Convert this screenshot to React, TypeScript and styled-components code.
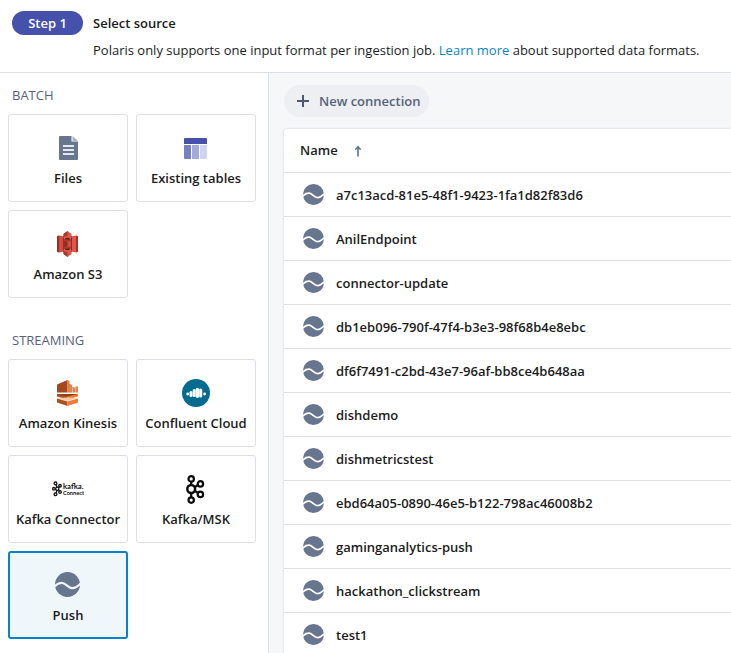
import React from 'react';
import styled, { createGlobalStyle } from 'styled-components';

const GlobalStyle = createGlobalStyle`
  *, *::before, *::after { box-sizing: border-box; }
  body {
    margin: 0;
    background: #f6f7f9;
    color: #1c1c1c;
    font: 13px/20px "Open Sans", "Noto Sans", sans-serif;
    overflow: hidden;
  }
`;

const Page = styled.div`
  display: flex;
  flex-direction: column;
  width: 100%;
  height: 100vh;
  overflow: hidden;
`;

const Header = styled.header`
  display: flex;
  align-items: flex-start;
  gap: 10px;
  flex: none;
  height: 73px;
  padding: 11px 12px 0;
  background: #fff;
  border-bottom: 1px solid #dcdee8;
`;

const StepBadge = styled.span`
  flex: none;
  width: 71px;
  height: 24px;
  border-radius: 12px;
  background: #4551ab;
  color: #fff;
  font-weight: 600;
  line-height: 24px;
  text-align: center;
`;

const HeaderText = styled.div`
  display: flex;
  flex-direction: column;
  gap: 7px;
  padding-top: 2px;
  white-space: nowrap;
`;

const Title = styled.h1`
  margin: 0;
  font-size: 13px;
  font-weight: 600;
  line-height: 20px;
`;

const Description = styled.p`
  margin: 0;
`;

const Link = styled.a`
  color: #0a84c6;
  text-decoration: none;
`;

const Body = styled.div`
  display: flex;
  flex: 1;
  min-height: 0;
`;

const Sidebar = styled.aside`
  flex: none;
  width: 269px;
  padding: 12px 8px 0;
  background: #fff;
  border-right: 1px solid #dfe1e8;
`;

const Group = styled.section`
  margin-bottom: 32px;
`;

const GroupTitle = styled.h2`
  margin: 0 0 9px;
  padding-left: 4px;
  color: #57627a;
  font-size: 13px;
  font-weight: 400;
  line-height: 20px;
`;

const Cards = styled.div`
  display: grid;
  grid-template-columns: 120px 120px;
  grid-auto-rows: 88px;
  gap: 8px;
`;

const Card = styled.button<{ $selected?: boolean }>`
  display: flex;
  flex-direction: column;
  align-items: center;
  justify-content: flex-start;
  padding: ${p => (p.$selected ? '14px 0 0' : '16px 0 0')};
  border: ${p => (p.$selected ? '2px solid #0783c9' : '1px solid #dcdee8')};
  border-radius: 3px;
  background: ${p => (p.$selected ? '#eff7fb' : '#fff')};
  color: inherit;
  font: inherit;
  font-weight: 600;
  white-space: nowrap;
`;

const IconBox = styled.span<{ $selected?: boolean }>`
  display: flex;
  align-items: center;
  justify-content: center;
  width: 34px;
  height: 34px;
  margin: 0 1px ${p => (p.$selected ? '4px' : '3px')} 0;
  svg { display: block; overflow: visible; }
`;

const Main = styled.main`
  display: flex;
  flex-direction: column;
  align-items: flex-start;
  flex: 1;
  min-width: 0;
  padding: 12px 0 0 15px;
  background: #f6f7f9;
  overflow: hidden;
`;

const NewButton = styled.button`
  display: flex;
  align-items: center;
  gap: 9px;
  flex: none;
  width: 145px;
  height: 32px;
  margin-bottom: 12px;
  padding: 0 0 0 12px;
  border: 0;
  border-radius: 16px;
  background: #edeff3;
  color: #57627a;
  font: inherit;
  font-weight: 600;
  white-space: nowrap;
`;

const Table = styled.div`
  width: 100%;
  background: #fff;
  border-radius: 3px 0 0 0;
  box-shadow: 0 0 2px rgba(40, 50, 80, 0.25);
  font-weight: 600;
`;

const TableHead = styled.div`
  display: flex;
  align-items: center;
  gap: 15px;
  height: 44px;
  padding: 0 0 1px 16px;
  border-bottom: 1px solid #dcdee8;
  svg { position: relative; top: 1px; }
`;

const Row = styled.div`
  display: flex;
  align-items: center;
  gap: 12px;
  height: 44px;
  padding-left: 19px;
  border-bottom: 1px solid #dcdee8;
  white-space: nowrap;
  svg { flex: none; margin-bottom: 1px; }
`;

const PushIcon = ({ size, wave = '#fff' }: { size: number; wave?: string }) => (
  <svg width={size} height={size} viewBox="0 0 24 24">
    <circle cx="12" cy="12" r="12" fill="#68758f" />
    <path
      d="M-.5 14C2 11.500 4.500 10.200 7 10.500c4 .5 5.500 5 9.500 5 3 0 5.500-1.800 8-4.500"
      fill="none"
      stroke={wave}
      strokeWidth="2"
    />
  </svg>
);

const FilesIcon = () => (
  <svg width="19" height="24" viewBox="-1 0 19 24">
    <path d="M1 0h11.500v5.500H19V23a1 1 0 0 1-1 1H1a1 1 0 0 1-1-1V1a1 1 0 0 1 1-1Z" fill="#68758f" />
    <path d="M13.500 0 19 5h-5.500Z" fill="#a9b2c6" />
    <path d="M4 9h11v2H4Zm0 4h11v2H4Zm0 4h11v2H4Z" fill="#e3e7f0" />
  </svg>
);

const TableIcon = () => (
  <svg width="23" height="21" viewBox="0 0 23 21">
    <path d="M1 0h21a1 1 0 0 1 1 1v5H0V1a1 1 0 0 1 1-1Z" fill="#4551ab" />
    <path d="M0 7h7v14H1a1 1 0 0 1-1-1Z" fill="#7681c4" />
    <path d="M8 7h7v14H8Z" fill="#a3abdb" />
    <path d="M16 7h7v13a1 1 0 0 1-1 1h-6Z" fill="#cfd4ec" />
  </svg>
);

const S3Icon = () => (
  <svg width="21" height="26" viewBox="0 0 21 26">
    <path d="M0 5.500 2 4.500l5 1v15l-5 1-2-1Z" fill="#d94b3f" />
    <path d="M21 5.500 19 4.500l-5 1v15l5 1 2-1Z" fill="#e1554a" />
    <path d="M0 5.500 2 4.500v17L0 20.500Z" fill="#8c3123" />
    <path d="M19 4.500 21 5.500v15l-2 1Z" fill="#9f3527" />
    <path d="M6 5h1v16H6Zm8 0h1v16h-1Z" fill="#8c3123" />
    <path d="M7 8h7v10H7Z" fill="#b33628" />
    <path d="m6.500 3 4-3 4 3v4l-4 1.200-4-1.200Z" fill="#e1554a" />
    <path d="m6.500 3 4-3v4.500L6.500 6Z" fill="#a5382b" />
    <path d="m6.500 23 4 3 4-3v-4l-4-1.200-4 1.200Z" fill="#e1554a" />
    <path d="m6.500 23 4 3v-4.500L6.500 20Z" fill="#a5382b" />
    <path d="m6.500 7.500 4-.8 4 .8-4 1.300Zm0 11 4 .8 4-.8-4-1.300Z" fill="#65231a" />
    <path d="M7 10.500h3.500v5H7Z" fill="#8c3123" />
    <path d="M10.500 10.500H14v5h-3.500Z" fill="#d94b3f" />
  </svg>
);

const KinesisIcon = () => (
  <svg width="21" height="26" viewBox="0 0 21 26">
    <path d="m0 4.500 10.500-4.500v12.500H0Z" fill="#a3481f" />
    <path d="M10.500 0 12.500 1v11.500h-2Z" fill="#ee7a38" />
    <path d="M12.500 4h1v8.500h-1Z" fill="#a3481f" />
    <path d="M13.500 4.300 15 5v7.500h-1.500Z" fill="#ee7a38" />
    <path d="M15.600 7h1v5.500h-1Z" fill="#a3481f" />
    <path d="M16.600 7.200 18 7.800v4.700h-1.400Z" fill="#ee7a38" />
    <path d="M18.600 6.500h.9v6h-.9Z" fill="#a3481f" />
    <path d="M19.500 6.200 21 6.800v5.700h-1.500Z" fill="#ee7a38" />
    <path d="M0 14h10.500v5.500L0 16.500Z" fill="#b0501f" />
    <path d="M10.500 14H21v2.500l-10.500 3Z" fill="#ee7a38" />
    <path d="M0 14h21l-10.500 2.500Z" fill="#8f3e1a" />
    <path d="m0 18 10.500-.5L21 18l-10.500 3Z" fill="#f9c6a4" />
    <path d="m0 18.500 10.500 3V26L0 22.500Z" fill="#b0501f" />
    <path d="M21 18.500l-10.500 3V26L21 22.500Z" fill="#ee7a38" />
  </svg>
);

const ConfluentIcon = () => (
  <svg width="28" height="28" viewBox="0 0 28 28">
    <circle cx="14" cy="14" r="14" fill="#066b91" />
    <g fill="none" stroke="#fff" strokeLinecap="round">
      <path strokeWidth="2.800" d="M5.700 15v.1M22.600 15v.1" />
      <path strokeWidth="3" d="M9 13.600v2.900" />
      <path strokeWidth="3.100" d="M12.200 11.500v5M18.700 11v6" />
      <path strokeWidth="3.400" d="M15.400 10.500v6.800" />
    </g>
  </svg>
);

const KafkaNodes = () => (
  <g fill="none" stroke="#0b0b0b" strokeWidth="2.200">
    <path d="M5 6.500v3M5 18.500v3.500M8.400 12.200l3.200-2M8.400 15.800l3.200 2" />
    <circle cx="5" cy="14" r="3.900" strokeWidth="2.500" />
    <circle cx="5" cy="3.900" r="2.700" />
    <circle cx="5" cy="25.100" r="2.700" />
    <circle cx="14.200" cy="8.900" r="2.700" />
    <circle cx="14.200" cy="19.400" r="2.700" />
  </g>
);

const KafkaIcon = () => (
  <svg width="18" height="29" viewBox="0.8 0 18 29">
    <KafkaNodes />
  </svg>
);

const KafkaConnectIcon = () => (
  <svg width="32" height="16" viewBox="0 0 32 16" fill="#111">
    <g fill="none" stroke="#111" strokeWidth="1.300">
      <circle cx="3.500" cy="2.400" r="1.400" />
      <circle cx="1.900" cy="7.800" r="1.300" />
      <circle cx="3.500" cy="13.200" r="1.400" />
      <circle cx="5.300" cy="7.800" r="1.600" />
      <circle cx="8" cy="4.800" r="1.300" />
      <circle cx="8" cy="11" r="1.300" />
      <path d="m4 3.500 1 3M4 12.300l1-3M6.700 6.500l1-1M6.700 9.200l1 1" />
    </g>
    <text x="11" y="7.600" textLength="20.500" lengthAdjust="spacingAndGlyphs" fontFamily="Lato, sans-serif" fontSize="8" fontWeight="700">kafka.</text>
    <text x="11" y="13.800" textLength="21" lengthAdjust="spacingAndGlyphs" fontFamily="Lato, sans-serif" fontSize="5" fontWeight="700">Connect</text>
  </svg>
);

const PlusIcon = () => (
  <svg width="14" height="14" viewBox="0 0 14 14">
    <path d="M7 1v12M1 7h12" stroke="#4d5970" strokeWidth="2" fill="none" />
  </svg>
);

const SortIcon = () => (
  <svg width="10" height="12" viewBox="0 0 10 12">
    <path d="M5 11.500V2" stroke="#68758f" strokeWidth="1.700" fill="none" />
    <path d="M5 .5 8.300 4.200 7.500 5 5 3.800 2.500 5 1.700 4.200Z" fill="#68758f" />
  </svg>
);

type Source = { label: string; icon: React.ReactNode; selected?: boolean };

const batch: Source[] = [
  { label: 'Files', icon: <FilesIcon /> },
  { label: 'Existing tables', icon: <TableIcon /> },
  { label: 'Amazon S3', icon: <S3Icon /> },
];

const streaming: Source[] = [
  { label: 'Amazon Kinesis', icon: <KinesisIcon /> },
  { label: 'Confluent Cloud', icon: <ConfluentIcon /> },
  { label: 'Kafka Connector', icon: <KafkaConnectIcon /> },
  { label: 'Kafka/MSK', icon: <KafkaIcon /> },
  { label: 'Push', icon: <PushIcon size={25} wave="#eff7fb" />, selected: true },
];

const connections = [
  'a7c13acd-81e5-48f1-9423-1fa1d82f83d6',
  'AnilEndpoint',
  'connector-update',
  'db1eb096-790f-47f4-b3e3-98f68b4e8ebc',
  'df6f7491-c2bd-43e7-96af-bb8ce4b648aa',
  'dishdemo',
  'dishmetricstest',
  'ebd64a05-0890-46e5-b122-798ac46008b2',
  'gaminganalytics-push',
  'hackathon_clickstream',
  'test1',
];

const SourceGroup = ({ title, items }: { title: string; items: Source[] }) => (
  <Group>
    <GroupTitle>{title}</GroupTitle>
    <Cards>
      {items.map(item => (
        <Card key={item.label} $selected={item.selected}>
          <IconBox $selected={item.selected}>{item.icon}</IconBox>
          {item.label}
        </Card>
      ))}
    </Cards>
  </Group>
);

export default function App() {
  return (
    <Page>
      <GlobalStyle />
      <Header>
        <StepBadge>Step 1</StepBadge>
        <HeaderText>
          <Title>Select source</Title>
          <Description>
            Polaris only supports one input format per ingestion job. <Link>Learn more</Link> about supported data formats.
          </Description>
        </HeaderText>
      </Header>
      <Body>
        <Sidebar>
          <SourceGroup title="BATCH" items={batch} />
          <SourceGroup title="STREAMING" items={streaming} />
        </Sidebar>
        <Main>
          <NewButton>
            <PlusIcon />
            New connection
          </NewButton>
          <Table>
            <TableHead>
              Name
              <SortIcon />
            </TableHead>
            {connections.map(name => (
              <Row key={name}>
                <PushIcon size={21} />
                {name}
              </Row>
            ))}
          </Table>
        </Main>
      </Body>
    </Page>
  );
}
